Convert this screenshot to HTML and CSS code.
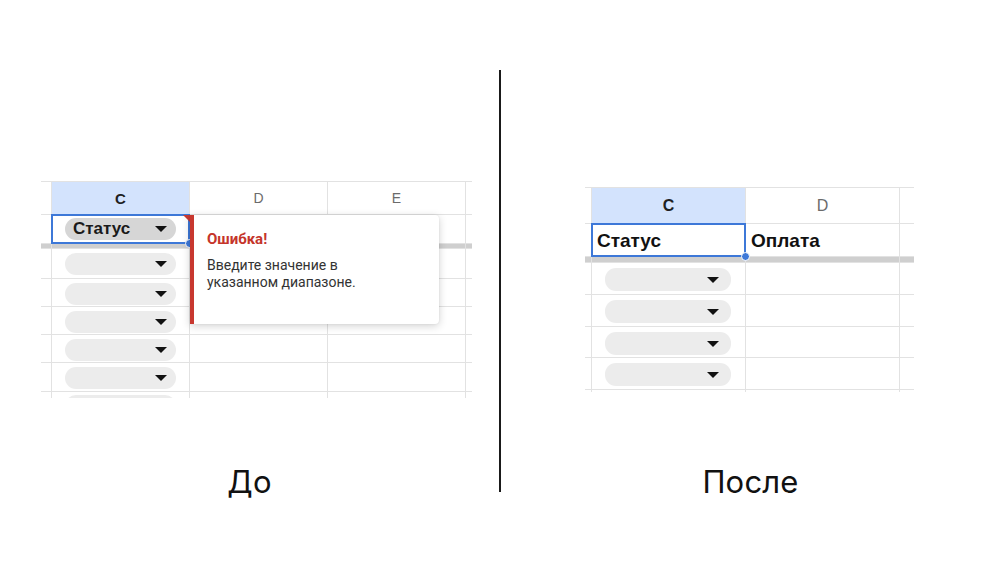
FILE: index.html
```html
<!DOCTYPE html>
<html lang="ru">
<head>
<meta charset="utf-8">
<link rel="stylesheet" href="styles.css">
</head>
<body>
<div class="page">
  <section class="half half-left">
    <div class="area area-left">
      <div class="sheet sheet-left">
        <div class="g"></div><div class="h h-sel">C</div><div class="h">D</div><div class="h">E</div><div class="g"></div>

        <div class="g"></div>
        <div class="c c-sel">
          <div class="pill pill-dark"><span class="pill-text">Статус</span><span class="arrow"></span></div>
          <span class="note"></span>
          <span class="dot"></span>
        </div>
        <div class="c"></div><div class="c"></div><div class="g"></div>

        <div class="bar"></div><div class="bar"></div><div class="bar"></div><div class="bar"></div><div class="bar"></div>

        <div class="g"></div><div class="c"><div class="pill"><span class="arrow"></span></div></div><div class="c"></div><div class="c"></div><div class="g"></div>
        <div class="g"></div><div class="c"><div class="pill"><span class="arrow"></span></div></div><div class="c"></div><div class="c"></div><div class="g"></div>
        <div class="g"></div><div class="c"><div class="pill"><span class="arrow"></span></div></div><div class="c"></div><div class="c"></div><div class="g"></div>
        <div class="g"></div><div class="c"><div class="pill"><span class="arrow"></span></div></div><div class="c"></div><div class="c"></div><div class="g"></div>
        <div class="g"></div><div class="c"><div class="pill"><span class="arrow"></span></div></div><div class="c"></div><div class="c"></div><div class="g"></div>
        <div class="g"></div><div class="c c-clip"><div class="pill pill-clip"></div></div><div class="c"></div><div class="c"></div><div class="g"></div>

        <div class="tooltip">
          <div class="tip-title">Ошибка!</div>
          <div class="tip-body">Введите значение в<br>указанном диапазоне.</div>
        </div>
      </div>
    </div>
    <div class="label">До</div>
  </section>

  <div class="divider"></div>

  <section class="half half-right">
    <div class="area area-right">
      <div class="sheet sheet-right">
        <div class="g"></div><div class="h h-sel">C</div><div class="h">D</div><div class="g"></div>

        <div class="g"></div>
        <div class="c c-sel c-text">Статус<span class="dot"></span></div>
        <div class="c c-text">Оплата</div>
        <div class="g"></div>

        <div class="bar"></div><div class="bar"></div><div class="bar"></div><div class="bar"></div>

        <div class="g"></div><div class="c"><div class="pill"><span class="arrow"></span></div></div><div class="c"></div><div class="g"></div>
        <div class="g"></div><div class="c"><div class="pill"><span class="arrow"></span></div></div><div class="c"></div><div class="g"></div>
        <div class="g"></div><div class="c"><div class="pill"><span class="arrow"></span></div></div><div class="c"></div><div class="g"></div>
        <div class="g"></div><div class="c"><div class="pill"><span class="arrow"></span></div></div><div class="c"></div><div class="g"></div>
        <div class="g"></div><div class="c"></div><div class="c"></div><div class="g"></div>
      </div>
    </div>
    <div class="label">После</div>
  </section>
</div>
</body>
</html>
```

FILE: styles.css
```css
* { box-sizing: border-box; }
html, body { margin: 0; padding: 0; background: #fff; }
body { font-family: Roboto, "Liberation Sans", Arial, sans-serif; }

.page {
  width: 1000px;
  height: 563px;
  display: flex;
  overflow: hidden;
}

.half {
  display: flex;
  flex-direction: column;
  align-items: center;
}
.half-left { width: 499px; }
.half-right { flex: 1; }

.divider {
  width: 2px;
  height: 422px;
  margin-top: 70px;
  background: #1a1a1a;
}

.area {
  width: 100%;
  height: 464px;
}
.area-left { padding: 181px 0 0 41px; }
.area-right { padding: 187px 0 0 84px; }

.label {
  font-family: Inter, "Noto Sans", sans-serif;
  font-size: 31px;
  line-height: 36px;
  color: #111;
  letter-spacing: 0.2px;
}

/* sheets */
.sheet {
  position: relative;
  display: grid;
  gap: 1px;
  background: #e2e2e2;
  border-top: 1px solid #e2e2e2;
}
.sheet-left {
  width: 431px;
  grid-template-columns: 10px 137px 137px 137px 6px;
  grid-template-rows: 32px 28px 4px 29px 27px 27px 27px 28px 6px;
}
.sheet-right {
  width: 329px;
  grid-template-columns: 6px 153px 153px 14px;
  grid-template-rows: 35px 32px 5px 31px 31px 30px 31px 2px;
}

.g, .c, .h { background: #fff; position: relative; }

.h {
  display: flex;
  align-items: center;
  justify-content: center;
  font-family: "Liberation Sans", Arial, sans-serif;
  font-size: 14px;
  color: #6b6b6b;
}
.sheet-right .h { font-size: 16px; }
.h-sel {
  background: #d3e3fd;
  color: #1f1f1f;
  font-weight: bold;
  font-size: 15px;
}

.bar { background: #cfcfcf; }

.c-sel {
  outline: 2px solid #3d78d8;
  outline-offset: -1px;
  z-index: 2;
}
.dot {
  position: absolute;
  right: -5px;
  bottom: -5px;
  width: 9px;
  height: 9px;
  border-radius: 50%;
  background: #3d78d8;
  border: 1px solid #fff;
}

.c-text {
  display: flex;
  align-items: center;
  padding-left: 5px;
  padding-top: 1px;
  font-family: "Liberation Sans", Arial, sans-serif;
  font-weight: bold;
  font-size: 19px;
  color: #111;
}

.pill {
  position: absolute;
  left: 13px;
  top: 4px;
  width: 111px;
  height: 22px;
  border-radius: 11px;
  background: #ececec;
  display: flex;
  align-items: center;
}
.sheet-right .pill {
  width: 126px;
  height: 23px;
  top: 5px;
}
.pill-dark { background: #d6d6d6; top: 3px; }
.pill-clip { top: 3px; height: 22px; }
.c-clip { overflow: hidden; }

.pill-text {
  padding-left: 8px;
  font-family: "Liberation Sans", Arial, sans-serif;
  font-weight: bold;
  font-size: 17px;
  color: #1a1a1a;
}
.arrow {
  position: absolute;
  right: 9px;
  top: 50%;
  margin-top: -3px;
  width: 0;
  height: 0;
  border-left: 6px solid transparent;
  border-right: 6px solid transparent;
  border-top: 6px solid #111;
}
.sheet-right .arrow { right: 12px; }

.note {
  position: absolute;
  right: -1px;
  top: 0;
  width: 0;
  height: 0;
  border-top: 7px solid #c83a33;
  border-left: 7px solid transparent;
}

.tooltip {
  position: absolute;
  left: 149px;
  top: 33px;
  width: 249px;
  height: 109px;
  background: #fff;
  border-left: 4px solid #c8382f;
  border-radius: 0 4px 4px 0;
  box-shadow: 0 2px 8px rgba(0,0,0,0.18), 0 0 2px rgba(0,0,0,0.08);
  padding: 15px 0 0 13px;
  z-index: 3;
}
.tip-title {
  font-weight: bold;
  font-size: 15px;
  color: #c5352b;
  line-height: 18px;
}
.tip-body {
  margin-top: 9px;
  font-size: 14px;
  line-height: 17px;
  color: #333;
}
```
